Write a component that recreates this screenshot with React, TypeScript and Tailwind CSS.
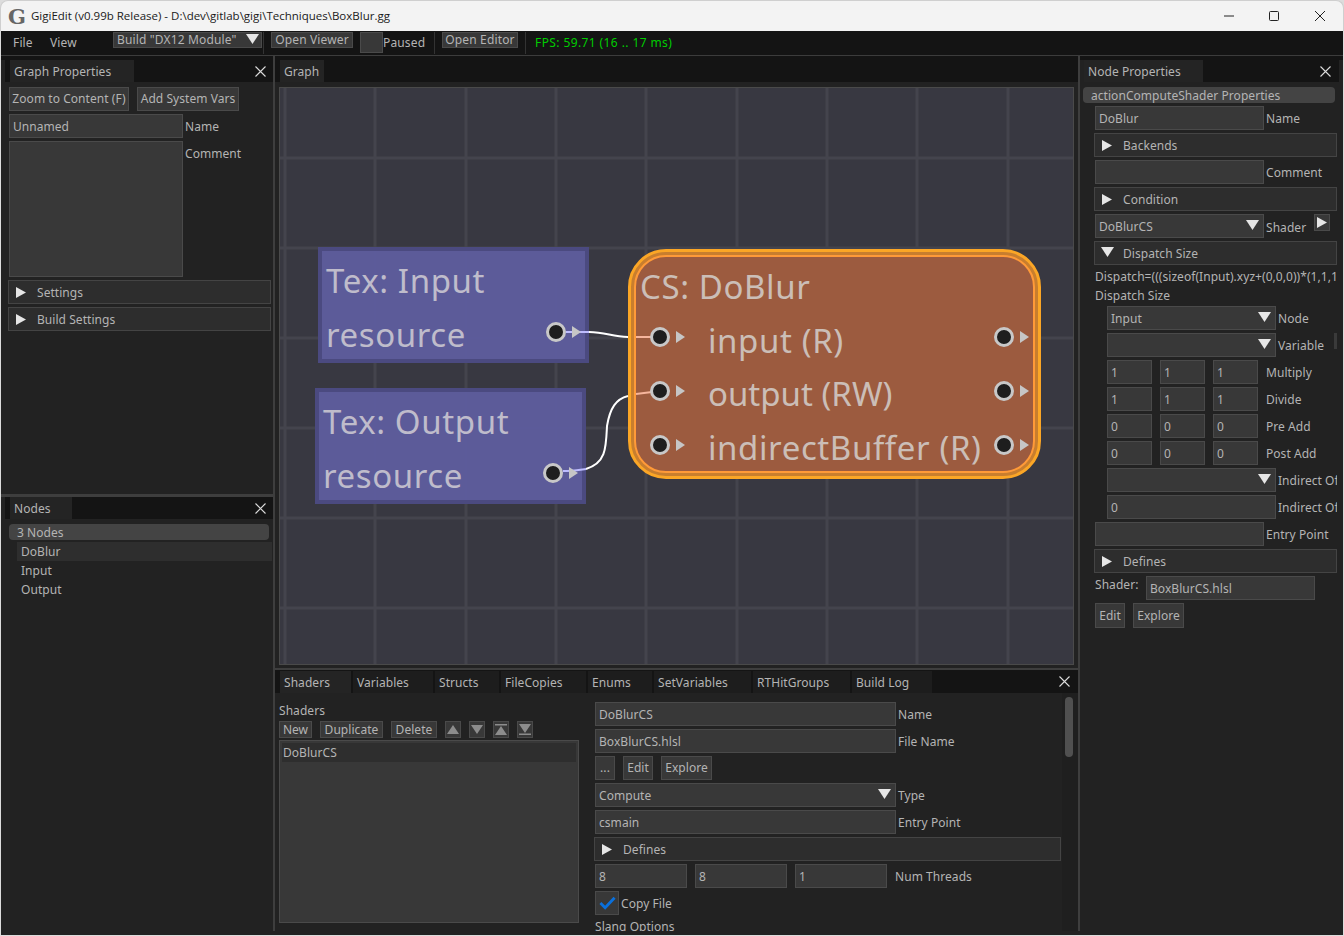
import type { ReactNode } from "react";

const Tri = ({ dir = "down", className = "" }: { dir?: "down" | "right"; className?: string }) =>
  dir === "down" ? (
    <svg viewBox="0 0 13 10" className={`w-[13px] h-[10px] shrink-0 ${className}`}>
      <path d="M0 0H13L6.5 10Z" fill="#e6e6e6" />
    </svg>
  ) : (
    <svg viewBox="0 0 10 11" className={`w-[10px] h-[11px] shrink-0 ${className}`}>
      <path d="M0 0L10 5.5L0 11Z" fill="#e6e6e6" />
    </svg>
  );

const Close = ({ className = "" }: { className?: string }) => (
  <svg viewBox="0 0 11 11" className={`w-[11px] h-[11px] shrink-0 ${className}`}>
    <path d="M0.5 0.5L10.5 10.5M10.5 0.5L0.5 10.5" stroke="#dcdcdc" strokeWidth="1.1" fill="none" />
  </svg>
);

function Field({ className = "", children }: { className?: string; children?: ReactNode }) {
  return (
    <div className={`h-6 shrink-0 flex items-center pl-[3px] bg-[#383838] border border-[#4a4a4a] whitespace-nowrap overflow-hidden ${className}`}>
      <span className="pt-[2px]">{children}</span>
    </div>
  );
}

function Select({ className = "", children }: { className?: string; children?: ReactNode }) {
  return (
    <div className={`h-6 shrink-0 flex items-center justify-between pl-[3px] pr-1 bg-[#383838] border border-[#4a4a4a] whitespace-nowrap overflow-hidden ${className}`}>
      <span className="pt-[2px]">{children}</span>
      <Tri className="mb-[3px]" />
    </div>
  );
}

function Btn({ className = "", children }: { className?: string; children?: ReactNode }) {
  return (
    <div className={`shrink-0 flex items-center justify-center bg-[#383838] border border-[#4a4a4a] whitespace-nowrap ${className}`}>
      {children}
    </div>
  );
}

function Section({ title, open, className = "" }: { title: string; open?: boolean; className?: string }) {
  return (
    <div className={`h-6 shrink-0 flex items-center pl-[7px] bg-[#2d2d2d] border border-[#444444] ${className}`}>
      <Tri dir={open ? "down" : "right"} className={open ? "-ml-[1px] mr-[9px] mb-[2px]" : "mr-[11px]"} />
      <span className="pt-[2px]">{title}</span>
    </div>
  );
}

function Row({ className = "", label, children }: { className?: string; label?: string; children: ReactNode }) {
  return (
    <div className={`flex items-center shrink-0 whitespace-nowrap ${className}`}>
      {children}
      {label && <span className="ml-[2px] pt-[2px]">{label}</span>}
    </div>
  );
}

function Triple({ a, label }: { a: string; label: string }) {
  return (
    <div className="flex ml-[13px] gap-2 items-center shrink-0 whitespace-nowrap">
      <Field className="w-[45px]">{a}</Field>
      <Field className="w-[45px]">{a}</Field>
      <Field className="w-[45px]">{a}</Field>
      <span className="pt-[2px]">{label}</span>
    </div>
  );
}

function Tab({ className = "", children, active }: { className?: string; children: ReactNode; active?: boolean }) {
  return (
    <div className={`h-[22px] shrink-0 flex items-center pl-1 pt-[2px] whitespace-nowrap ${active ? "bg-[#242424]" : "bg-[#1d1d1d]"} ${className}`}>
      {children}
    </div>
  );
}

function Pin({ className = "" }: { className?: string }) {
  return (
    <div className={`absolute w-5 h-5 rounded-full border-[3px] border-[#c8c8c8] bg-[#1e1e1e] ${className}`}>
      <svg viewBox="0 0 9 12" className="absolute left-[23px] top-[1px] w-[9px] h-[12px]">
        <path d="M0 0L9 6L0 12Z" fill="#c6c6c6" />
      </svg>
    </div>
  );
}

function Tool({ d }: { d: string }) {
  return (
    <div className="w-4 h-[17px] shrink-0 flex items-center justify-center bg-[#383838] border border-[#4a4a4a]">
      <svg viewBox="0 0 12 11" className="w-3 h-[11px]">
        <path d={d} fill="#8c8c8c" />
      </svg>
    </div>
  );
}

function Graph() {
  const xs = [285, 375, 466, 556, 646, 737, 827, 917, 1008];
  const ys = [158, 248, 338, 428, 518, 608];
  return (
    <div className="relative w-[795px] h-[578px] ml-1 mt-[5px] bg-[#383841] border border-[#4a4a4a] overflow-hidden shrink-0">
      <svg viewBox="280 88 793 576" className="absolute inset-0 w-[793px] h-[576px]">
        {xs.map((x) => (
          <line key={x} x1={x} x2={x} y1={88} y2={664} stroke="#44444d" strokeWidth="3" />
        ))}
        {ys.map((y) => (
          <line key={y} x1={280} x2={1073} y1={y} y2={y} stroke="#44444d" strokeWidth="3" />
        ))}
      </svg>

      <div className="absolute left-[38px] top-[159px] w-[271px] h-[116px] border-[4px] border-[#4b4a80] bg-[#5e5d9e]/95 pl-1 pt-[3px] text-[33px] leading-[54px] text-[#bfbccb] tracking-[0.6px]">
        <div>Tex: Input</div>
        <div>resource</div>
      </div>
      <div className="absolute left-[35px] top-[300px] w-[271px] h-[116px] border-[4px] border-[#4b4a80] bg-[#5e5d9e]/95 pl-1 pt-[3px] text-[33px] leading-[54px] text-[#bfbccb] tracking-[0.6px]">
        <div>Tex: Output</div>
        <div>resource</div>
      </div>
      <div className="absolute left-[348px] top-[161px] w-[413px] h-[230px] rounded-[38px] border-[3px] border-[#fba626] bg-[#c87e2e]">
        <div className="w-full h-full rounded-[35px] p-[3px]">
          <div className="w-full h-full rounded-[32px] border-[2px] border-[#ff9a38] bg-[#9c5b3f] pl-1 pt-[3px] text-[33px] leading-[53.5px] text-[#cbbeb7] tracking-[0.6px] whitespace-nowrap">
            <div>CS: DoBlur</div>
            <div className="pl-[68px]">input (R)</div>
            <div className="pl-[68px] tracking-normal">output (RW)</div>
            <div className="pl-[68px]">indirectBuffer (R)</div>
          </div>
        </div>
      </div>

      <svg viewBox="280 88 793 576" className="absolute inset-0 w-[793px] h-[576px]" fill="none" strokeWidth="2">
        <path d="M589 332C606 332 612 337 628 337" stroke="#ffffff" />
        <path d="M566 332H589" stroke="#bdbcff" />
        <path d="M636 337H652" stroke="#f6b59c" />
        <path d="M586 469C606 463 606 448 607 426C610 408 616 399 628 396" stroke="#ffffff" />
        <path d="M563 471C572 471 578 470 586 469" stroke="#bdbcff" />
        <path d="M636 394L652 392" stroke="#f6b59c" />
      </svg>

      <Pin className="left-[266px] top-[234px]" />
      <Pin className="left-[263px] top-[375px]" />
      <Pin className="left-[370px] top-[239px]" />
      <Pin className="left-[370px] top-[293px]" />
      <Pin className="left-[370px] top-[347px]" />
      <Pin className="left-[714px] top-[239px]" />
      <Pin className="left-[714px] top-[293px]" />
      <Pin className="left-[714px] top-[347px]" />
    </div>
  );
}

export default function App() {
  return (
    <div className="w-[1344px] h-[936px] bg-[#dcdcdc] overflow-hidden flex flex-col text-[12px] leading-none text-[#b4b4b4] tracking-[0.05px] font-['Noto_Sans',sans-serif]">
      <div className="h-[31px] shrink-0 flex items-center bg-[#f3f3f3] rounded-t-[8px] border-t border-x border-[#cfcfcf] text-[#1a1a1a]">
        <span className="ml-[7px] w-[18px] text-center text-[21px] font-bold text-[#666666] font-['DejaVu_Serif',serif]">G</span>
        <span className="ml-[5px] text-[11.5px] tracking-normal font-['Open_Sans',sans-serif]">GigiEdit (v0.99b Release) - D:\dev\gitlab\gigi\Techniques\BoxBlur.gg</span>
        <div className="ml-auto flex items-center">
          <svg viewBox="0 0 10 10" className="w-[10px] h-[10px] mr-[35px]"><path d="M0 5H10" stroke="#222222" /></svg>
          <svg viewBox="0 0 10 10" className="w-[10px] h-[10px] mr-9"><rect x="0.5" y="0.5" width="9" height="9" rx="1" stroke="#222222" fill="none" /></svg>
          <svg viewBox="0 0 10 10" className="w-[10px] h-[10px] mr-[18px]"><path d="M0 0L10 10M10 0L0 10" stroke="#222222" /></svg>
        </div>
      </div>

      <div className="flex-1 min-h-0 mx-[1px] mb-[1px] flex flex-col bg-[#222222]">
        <div className="h-[25px] shrink-0 flex items-start pt-[1px] bg-[#141414] border-b border-[#3c3c3c] whitespace-nowrap tracking-[0.15px]">
          <span className="ml-[12px] mt-[5px] w-[37px]">File</span>
          <span className="mt-[5px] w-[63px]">View</span>
          <div className="w-[149px] h-4 flex items-center justify-between pl-[3px] pr-[2px] bg-[#383838] border border-[#4a4a4a]">
            <span>Build "DX12 Module"</span>
            <Tri className="mb-[2px]" />
          </div>
          <div className="ml-[1px] w-[1px] h-[22px] bg-[#333333]" />
          <div className="ml-[7px] w-[82px] h-4 flex items-center justify-center bg-[#383838] border border-[#4a4a4a]">Open Viewer</div>
          <div className="ml-[7px] w-[23px] h-[21px] bg-[#383838] border border-[#4a4a4a]" />
          <span className="mt-[5px] w-[51px]">Paused</span>
          <div className="w-[1px] h-[22px] bg-[#333333]" />
          <div className="ml-[7px] w-[76px] h-4 flex items-center justify-center bg-[#383838] border border-[#4a4a4a]">Open Editor</div>
          <div className="ml-[7px] w-[1px] h-[22px] bg-[#333333]" />
          <span className="ml-[9px] mt-[5px] text-[#00cc00] tracking-[0.4px]">FPS: 59.71 (16 .. 17 ms)</span>
        </div>

        <div className="flex-1 min-h-0 flex mb-1">
          {/* left column */}
          <div className="w-[274px] shrink-0 flex flex-col border-r-2 border-[#3e3e3e]">
            <div className="h-[438px] shrink-0 flex flex-col">
              <div className="h-1 shrink-0 bg-[#141414]" />
              <div className="h-[22px] shrink-0 ml-1 flex items-center bg-[#141414] pr-[7px]">
                <Tab active className="ml-[5px] w-[124px]">Graph Properties</Tab>
                <Close className="ml-auto" />
              </div>
              <div className="flex flex-col gap-[3px] pt-[5px] pl-2">
                <div className="flex gap-2">
                  <Btn className="w-[120px] h-6">Zoom to Content (F)</Btn>
                  <Btn className="w-[102px] h-6">Add System Vars</Btn>
                </div>
                <Row label="Name"><Field className="w-[174px]">Unnamed</Field></Row>
                <div className="flex">
                  <div className="w-[174px] h-[136px] bg-[#383838] border border-[#4a4a4a]" />
                  <span className="ml-[2px] mt-[7px]">Comment</span>
                </div>
                <Section title="Settings" className="-ml-[1px] w-[263px]" />
                <Section title="Build Settings" className="-ml-[1px] w-[263px]" />
              </div>
            </div>
            <div className="h-[3px] shrink-0 bg-[#3e3e3e]" />
            <div className="flex-1 flex flex-col">
              <div className="h-[22px] shrink-0 ml-1 flex items-center bg-[#141414] pr-[7px]">
                <Tab active className="ml-[5px] w-[62px]">Nodes</Tab>
                <Close className="ml-auto" />
              </div>
              <div className="pt-[5px] flex flex-col">
                <div className="ml-2 w-[260px] h-4 flex items-center pl-2 pt-[2px] bg-[#444444] rounded-[4px]">3 Nodes</div>
                <div className="ml-4 mr-[1px] mt-[2px] h-[19px] flex items-center pl-1 pt-[1px] bg-[#2e2e2e]">DoBlur</div>
                <div className="ml-4 h-[19px] flex items-center pl-1 pt-[1px]">Input</div>
                <div className="ml-4 h-[19px] flex items-center pl-1 pt-[1px]">Output</div>
              </div>
            </div>
          </div>

          {/* center column */}
          <div className="w-[805px] shrink-0 flex flex-col border-r-2 border-[#3e3e3e]">
            <div className="h-[612px] shrink-0 flex flex-col">
              <div className="h-[26px] shrink-0 flex items-end bg-[#141414] pl-[5px]">
                <Tab active className="w-[44px]">Graph</Tab>
              </div>
              <Graph />
            </div>
            <div className="h-[2px] shrink-0 bg-[#3e3e3e]" />
            <div className="flex-1 min-h-0 flex flex-col">
              <div className="h-[23px] shrink-0 flex items-end gap-[2px] bg-[#141414] pl-[5px] pr-2">
                <Tab active className="w-[71px]">Shaders</Tab>
                <Tab className="w-[80px]">Variables</Tab>
                <Tab className="w-[64px]">Structs</Tab>
                <Tab className="w-[85px]">FileCopies</Tab>
                <Tab className="w-[64px]">Enums</Tab>
                <Tab className="w-[97px]">SetVariables</Tab>
                <Tab className="w-[97px]">RTHitGroups</Tab>
                <Tab className="w-[80px]">Build Log</Tab>
                <Close className="ml-auto mb-[6px]" />
              </div>
              <div className="flex-1 min-h-0 flex overflow-hidden">
                <div className="w-[320px] shrink-0 pl-1">
                  <div className="h-[28px] flex items-end pb-[4px]">Shaders</div>
                  <div className="flex items-center h-[17px]">
                    <Btn className="w-[33px] h-[17px]">New</Btn>
                    <Btn className="ml-2 w-[63px] h-[17px]">Duplicate</Btn>
                    <Btn className="ml-2 w-[46px] h-[17px]">Delete</Btn>
                    <div className="ml-2 flex gap-2">
                      <Tool d="M6 1L12 10H0Z" />
                      <Tool d="M0 1H12L6 10Z" />
                      <Tool d="M0 0H12V1.5H0ZM6 2L12 11H0Z" />
                      <Tool d="M0 0H12L6 9ZM0 9.5H12V11H0Z" />
                    </div>
                  </div>
                  <div className="mt-[2px] w-[300px] h-[183px] p-[2px] bg-[#383838] border border-[#4a4a4a]">
                    <div className="h-[19px] flex items-center pl-[1px] pt-[1px] bg-[#2e2e2e]">DoBlurCS</div>
                  </div>
                </div>
                <div className="w-[467px] shrink-0 pt-[9px] flex flex-col gap-[3px]">
                  <Row label="Name"><Field className="w-[301px]">DoBlurCS</Field></Row>
                  <Row label="File Name"><Field className="w-[301px]">BoxBlurCS.hlsl</Field></Row>
                  <div className="flex gap-2 h-6">
                    <Btn className="w-5 h-6">...</Btn>
                    <Btn className="w-[30px] h-6">Edit</Btn>
                    <Btn className="w-[51px] h-6">Explore</Btn>
                  </div>
                  <Row label="Type"><Select className="w-[301px]">Compute</Select></Row>
                  <Row label="Entry Point"><Field className="w-[301px]">csmain</Field></Row>
                  <Section title="Defines" className="-ml-[1px] w-[467px]" />
                  <div className="flex gap-2 items-center">
                    <Field className="w-[92px]">8</Field>
                    <Field className="w-[92px]">8</Field>
                    <Field className="w-[92px]">1</Field>
                    <span className="pt-[1px]">Num Threads</span>
                  </div>
                  <div className="flex items-center">
                    <div className="w-6 h-6 flex items-center justify-center bg-[#383838] border border-[#4a4a4a]">
                      <svg viewBox="0 0 18 14" className="w-[17px] h-[14px]">
                        <path d="M1.5 7L6.5 12L16.5 1.5" stroke="#0a70dc" strokeWidth="3" fill="none" />
                      </svg>
                    </div>
                    <span className="ml-[2px] pt-[2px]">Copy File</span>
                  </div>
                  <div className="h-[18px] pt-[3px]">Slang Options</div>
                </div>
                <div className="ml-auto w-[16px] shrink-0 pl-[3px] pt-[4px] bg-[#1f1f1f]">
                  <div className="w-2 h-[60px] rounded-[4px] bg-[#505050]" />
                </div>
              </div>
            </div>
          </div>

          {/* right column */}
          <div className="flex-1 min-w-0 flex flex-col">
            <div className="h-1 shrink-0 bg-[#141414]" />
            <div className="h-[22px] shrink-0 mx-1 flex items-center bg-[#141414] pr-2">
              <Tab active className="w-[119px]">Node Properties</Tab>
              <Close className="ml-auto" />
            </div>
            <div className="relative w-[254px] ml-[3px] pt-[5px] flex flex-col gap-[3px] overflow-hidden whitespace-nowrap">
              <div className="w-[252px] h-4 shrink-0 flex items-center pl-2 pt-[2px] bg-[#444444] rounded-[4px]">actionComputeShader Properties</div>
              <div className="pl-[11px] flex flex-col gap-[3px]">
                <Row label="Name"><Field className="ml-[1px] w-[169px]">DoBlur</Field></Row>
                <Section title="Backends" className="w-[243px]" />
                <Row label="Comment"><Field className="ml-[1px] w-[169px]" /></Row>
                <Section title="Condition" className="w-[243px]" />
                <div className="flex items-start">
                  <Select className="ml-[1px] w-[169px]">DoBlurCS</Select>
                  <span className="ml-[2px] mt-[8px]">Shader</span>
                  <div className="ml-2 w-4 h-[17px] flex items-center justify-center bg-[#383838] border border-[#4a4a4a]"><Tri dir="right" /></div>
                </div>
                <Section title="Dispatch Size" open className="w-[243px]" />
                <div className="-mb-[2px] flex flex-col gap-[1px] ml-[1px]">
                  <div className="h-[18px] flex items-center">Dispatch=(((sizeof(Input).xyz+(0,0,0))*(1,1,1))/(1,1,1))</div>
                  <div className="h-[18px] flex items-center">Dispatch Size</div>
                </div>
                <Row label="Node"><Select className="ml-[13px] w-[169px]">Input</Select></Row>
                <Row label="Variable"><Select className="ml-[13px] w-[169px]" /></Row>
                <Triple a="1" label="Multiply" />
                <Triple a="1" label="Divide" />
                <Triple a="0" label="Pre Add" />
                <Triple a="0" label="Post Add" />
                <Row label="Indirect Offset"><Select className="ml-[13px] w-[169px]" /></Row>
                <Row label="Indirect Offset"><Field className="ml-[13px] w-[169px]">0</Field></Row>
                <Row label="Entry Point"><Field className="ml-[1px] w-[169px]" /></Row>
                <Section title="Defines" className="w-[243px]" />
                <div className="flex items-start ml-[1px]">
                  <span className="mt-[3px] w-[51px]">Shader:</span>
                  <Field className="w-[169px]">BoxBlurCS.hlsl</Field>
                </div>
                <div className="flex gap-2 ml-[1px]">
                  <Btn className="w-[30px] h-[25px]">Edit</Btn>
                  <Btn className="w-[51px] h-[25px]">Explore</Btn>
                </div>
              </div>
              <div className="absolute right-0 top-[251px] w-[3px] h-4 bg-[#3a3a3a]" />
            </div>
          </div>
        </div>
      </div>
    </div>
  );
}
